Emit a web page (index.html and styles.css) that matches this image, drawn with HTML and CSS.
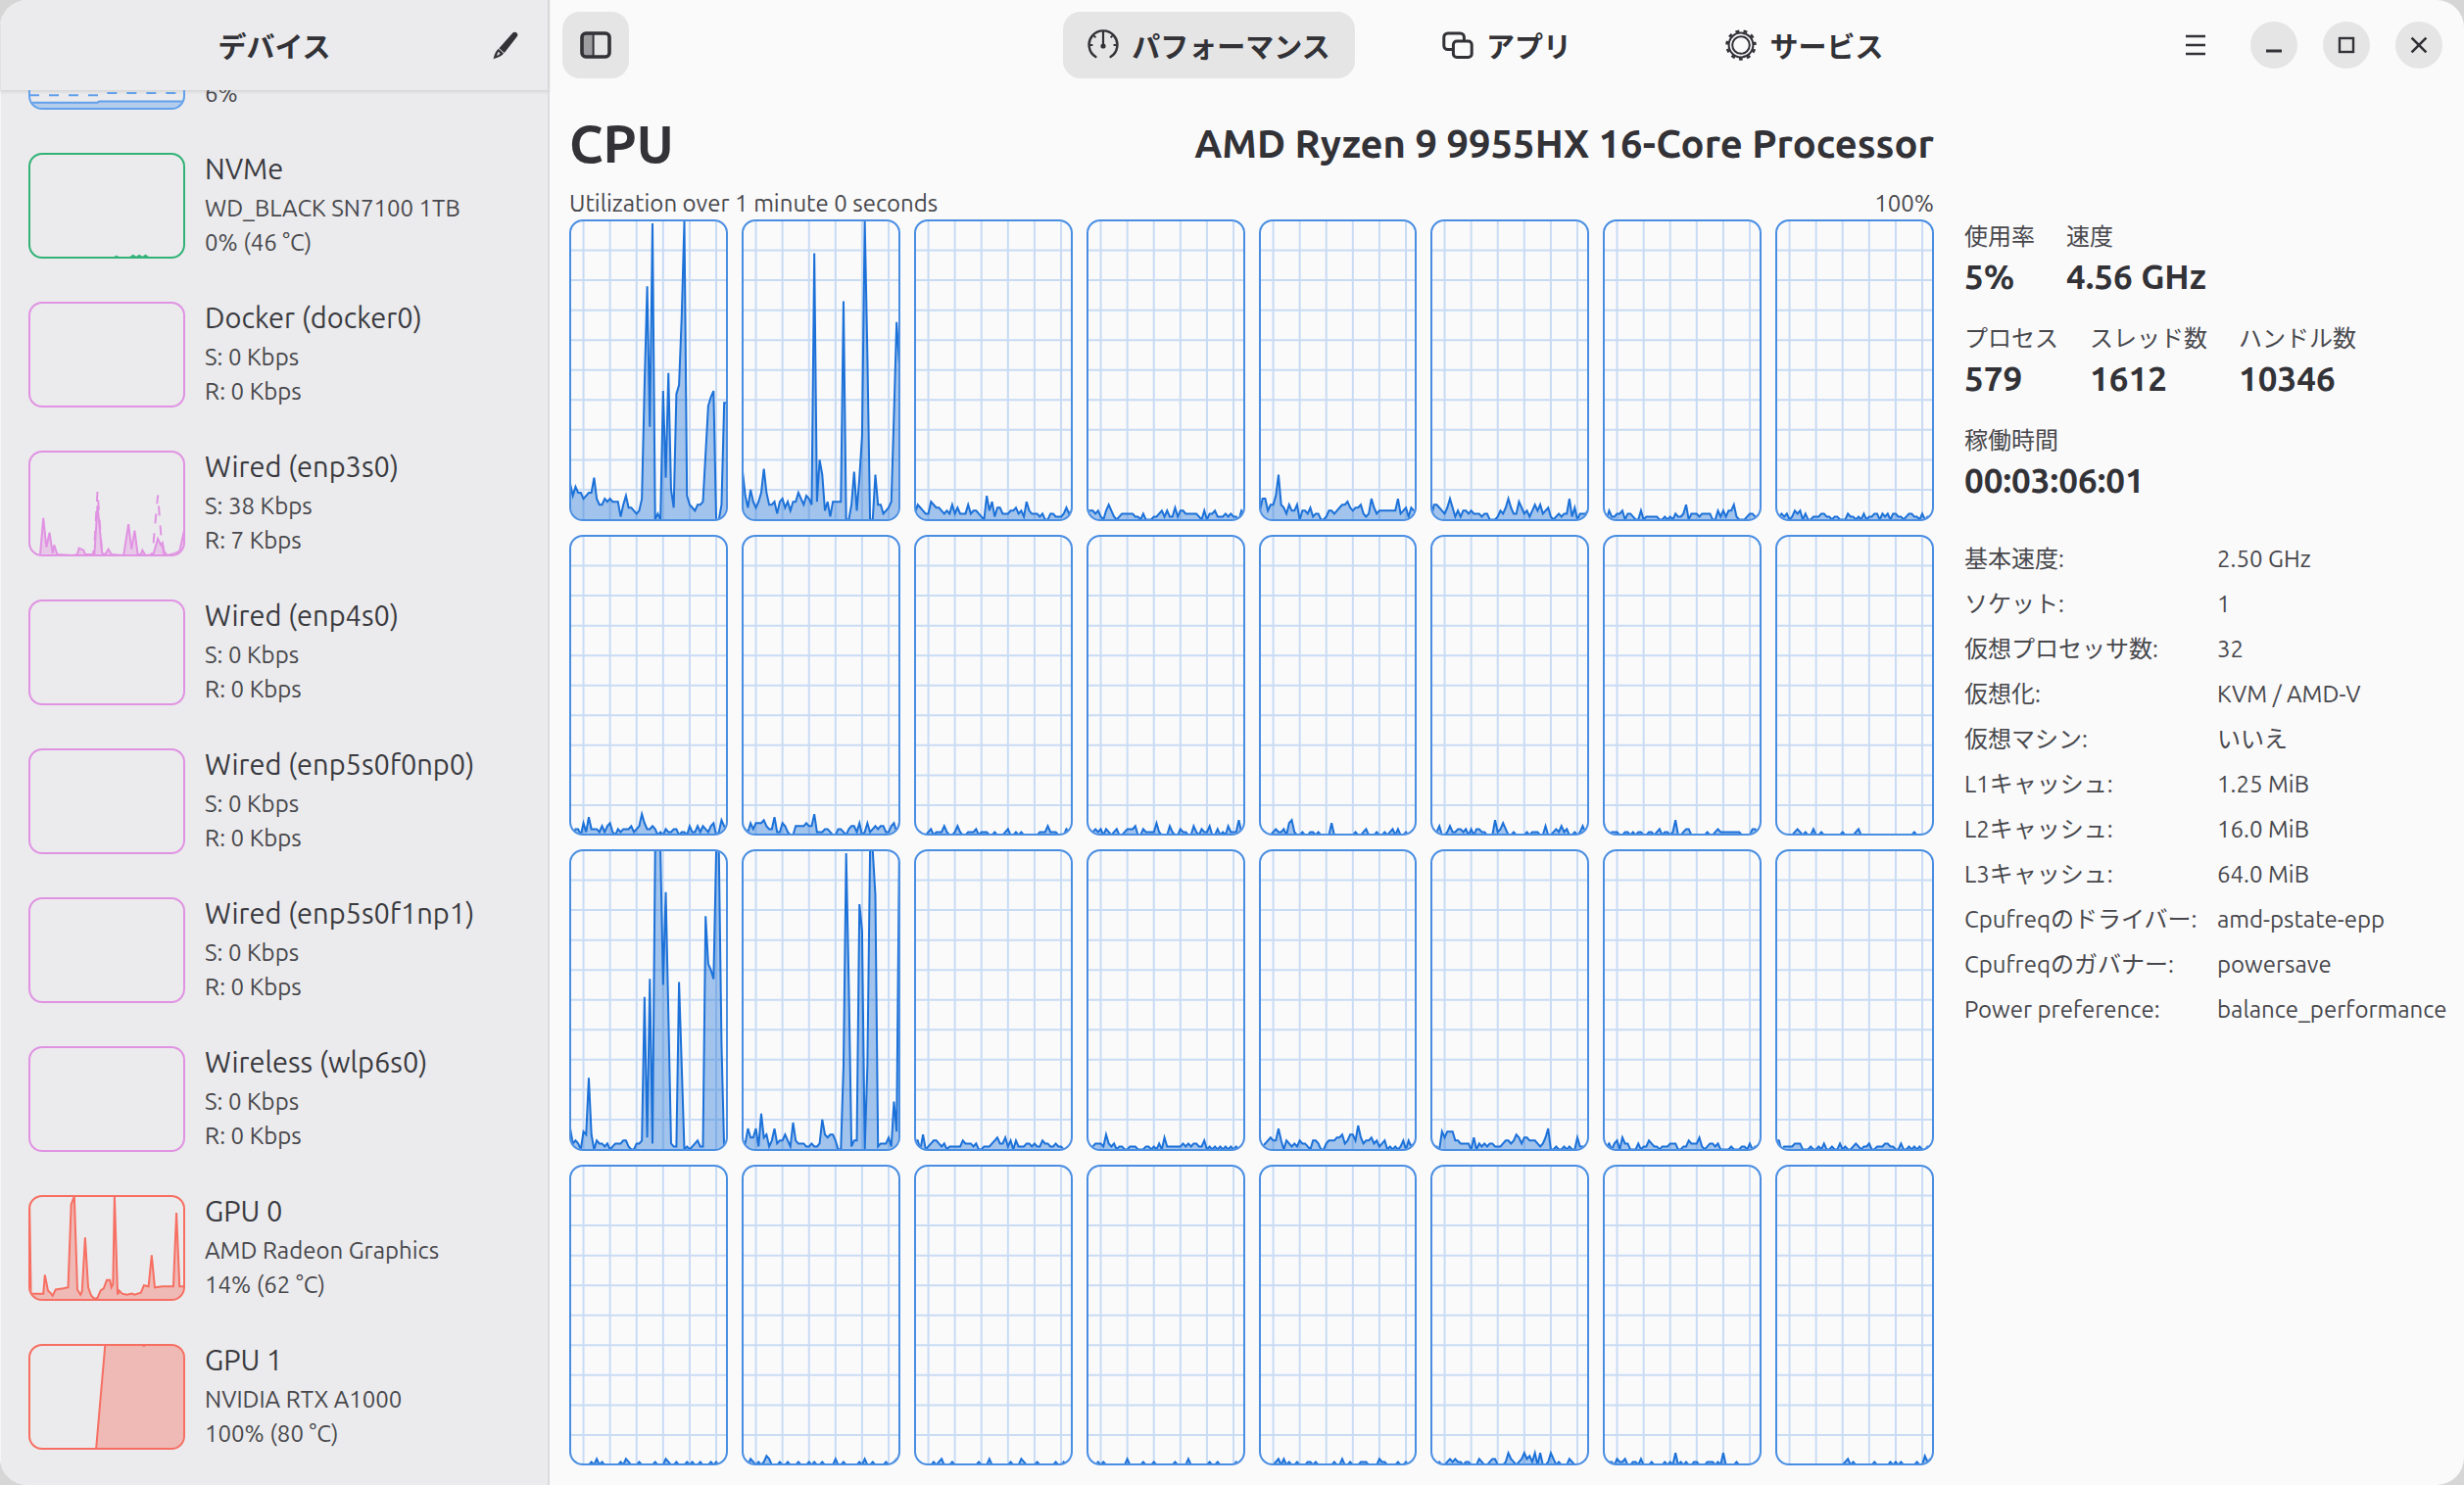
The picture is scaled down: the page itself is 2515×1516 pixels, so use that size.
FILE: index.html
```html
<!DOCTYPE html>
<html lang="ja">
<head>
<meta charset="utf-8">
<title>CPU</title>
<link rel="stylesheet" href="styles.css">
</head>
<body>
<div class="window">
  <aside class="sidebar">
    <header class="sidebar-header">
      <h2 class="sidebar-title">デバイス</h2>
      <button class="icon-button edit-button" type="button" aria-label="編集">
        <svg class="icon" viewBox="0 0 16 16"><path d="M12.200 1.800c.6-.6 1.400-.6 2 0s.7 1.300.1 2L7.900 12 5.200 9.600z" fill="currentColor"/><path d="M4.900 9.900L7.500 12.200c-.8 1.200-2.200 2-5.200 2.900.5-2.500 1.400-4.300 2.600-5.200z" fill="currentColor"/><path d="M4.800 11.400l1 .9c-.5.5-.9.9-1.700 1.200.1-.8.3-1.500.7-2.100z" fill="#d9d9db"/></svg>
      </button>
    </header>
    <ul class="devices">
      <li><button class="device" type="button"><span class="thumb blue" data-chart="memory"></span><span class="device-text"><span class="device-line">6%</span></span></button></li>
      <li><button class="device" type="button"><span class="thumb green" data-chart="nvme"></span><span class="device-text"><span class="device-name">NVMe</span><span class="device-line">WD_BLACK SN7100 1TB</span><span class="device-line">0% (46 °C)</span></span></button></li>
      <li><button class="device" type="button"><span class="thumb pink"></span><span class="device-text"><span class="device-name">Docker (docker0)</span><span class="device-line">S: 0 Kbps</span><span class="device-line">R: 0 Kbps</span></span></button></li>
      <li><button class="device" type="button"><span class="thumb pink" data-chart="wired"></span><span class="device-text"><span class="device-name">Wired (enp3s0)</span><span class="device-line">S: 38 Kbps</span><span class="device-line">R: 7 Kbps</span></span></button></li>
      <li><button class="device" type="button"><span class="thumb pink"></span><span class="device-text"><span class="device-name">Wired (enp4s0)</span><span class="device-line">S: 0 Kbps</span><span class="device-line">R: 0 Kbps</span></span></button></li>
      <li><button class="device" type="button"><span class="thumb pink"></span><span class="device-text"><span class="device-name">Wired (enp5s0f0np0)</span><span class="device-line">S: 0 Kbps</span><span class="device-line">R: 0 Kbps</span></span></button></li>
      <li><button class="device" type="button"><span class="thumb pink"></span><span class="device-text"><span class="device-name">Wired (enp5s0f1np1)</span><span class="device-line">S: 0 Kbps</span><span class="device-line">R: 0 Kbps</span></span></button></li>
      <li><button class="device" type="button"><span class="thumb pink"></span><span class="device-text"><span class="device-name">Wireless (wlp6s0)</span><span class="device-line">S: 0 Kbps</span><span class="device-line">R: 0 Kbps</span></span></button></li>
      <li><button class="device" type="button"><span class="thumb red" data-chart="gpu0"></span><span class="device-text"><span class="device-name">GPU 0</span><span class="device-line">AMD Radeon Graphics</span><span class="device-line">14% (62 °C)</span></span></button></li>
      <li><button class="device" type="button"><span class="thumb red" data-chart="gpu1"></span><span class="device-text"><span class="device-name">GPU 1</span><span class="device-line">NVIDIA RTX A1000</span><span class="device-line">100% (80 °C)</span></span></button></li>
    </ul>
  </aside>

  <main class="main">
    <header class="topbar">
      <div class="topbar-start">
        <button class="icon-button toggle-button" type="button" aria-label="サイドバー">
          <svg class="icon" viewBox="0 0 16 16"><rect x="1" y="2" width="6" height="12" fill="currentColor" opacity=".4"/><rect x="1" y="2" width="14" height="12" rx="2" fill="none" stroke="currentColor" stroke-width="1.800"/><path d="M6.800 2v12" stroke="currentColor" stroke-width="1"/></svg>
        </button>
      </div>
      <nav class="tabs">
        <button class="tab active" type="button">
          <svg class="icon" viewBox="0 0 16 16" fill="none" stroke="currentColor"><path d="M4.200 14A7.200 7.200 0 1 1 11.800 14" stroke-width="1.200" stroke-linecap="round"/><path d="M8 1V8.500" stroke-width="1.100"/><path d="M1.200 8h1.500M14.800 8h-1.500M3.200 3.200l1 1M12.800 3.200l-1 1" stroke-width="1"/><circle cx="8" cy="8.500" r="1.300" fill="currentColor" stroke="none"/></svg>
          パフォーマンス
        </button>
        <button class="tab" type="button">
          <svg class="icon" viewBox="0 0 16 16" fill="none" stroke="currentColor" stroke-width="1.500"><rect x="5.700" y="6" width="9.400" height="8.300" rx="1.800"/><path d="M5.200 10.300H2.900a2 2 0 0 1-2-2V4a2 2 0 0 1 2-2h6.300a2 2 0 0 1 2 2v1.600"/></svg>
          アプリ
        </button>
        <button class="tab" type="button">
          <svg class="icon" viewBox="0 0 16 16" fill="none" stroke="currentColor"><circle cx="8" cy="8" r="6.200" stroke-width="1"/><circle cx="8" cy="8" r="4.400" stroke-width="1"/><circle cx="8" cy="8" r="7.200" stroke-width="1.300" stroke-dasharray="1.900 2.213" stroke-dashoffset="-10.360"/></svg>
          サービス
        </button>
      </nav>
      <div class="topbar-end">
        <button class="icon-button menu-button" type="button" aria-label="メニュー">
          <svg class="icon" viewBox="0 0 16 16"><path d="M3 3.500h10M3 8h10M3 12.500h10" stroke="currentColor" stroke-width="1.300"/></svg>
        </button>
        <button class="window-button" type="button" aria-label="最小化"><svg class="icon" viewBox="0 0 16 16"><path d="M4 11h8" stroke="currentColor" stroke-width="1.400"/></svg></button>
        <button class="window-button" type="button" aria-label="最大化"><svg class="icon" viewBox="0 0 16 16"><rect x="4.500" y="4.500" width="7" height="7" fill="none" stroke="currentColor" stroke-width="1.200"/></svg></button>
        <button class="window-button" type="button" aria-label="閉じる"><svg class="icon" viewBox="0 0 16 16"><path d="M4.300 4.300l7.400 7.400M11.700 4.300l-7.400 7.400" stroke="currentColor" stroke-width="1.300"/></svg></button>
      </div>
    </header>

    <div class="content">
      <section class="usage">
        <div class="usage-title">
          <h1 class="usage-name">CPU</h1>
          <p class="usage-model">AMD Ryzen 9 9955HX 16-Core Processor</p>
        </div>
        <div class="usage-caption"><span>Utilization over 1 minute 0 seconds</span><span>100%</span></div>
        <div class="cores" id="cores"></div>
      </section>
      <section class="details">
        <dl class="stats">
          <div class="stat"><dt>使用率</dt><dd>5%</dd></div>
          <div class="stat"><dt>速度</dt><dd>4.56 GHz</dd></div>
        </dl>
        <dl class="stats">
          <div class="stat"><dt>プロセス</dt><dd>579</dd></div>
          <div class="stat"><dt>スレッド数</dt><dd>1612</dd></div>
          <div class="stat"><dt>ハンドル数</dt><dd>10346</dd></div>
        </dl>
        <dl class="stats">
          <div class="stat"><dt>稼働時間</dt><dd>00:03:06:01</dd></div>
        </dl>
        <table class="specs">
          <tr><th scope="row">基本速度:</th><td>2.50 GHz</td></tr>
          <tr><th scope="row">ソケット:</th><td>1</td></tr>
          <tr><th scope="row">仮想プロセッサ数:</th><td>32</td></tr>
          <tr><th scope="row">仮想化:</th><td>KVM / AMD-V</td></tr>
          <tr><th scope="row">仮想マシン:</th><td>いいえ</td></tr>
          <tr><th scope="row">L1キャッシュ:</th><td>1.25 MiB</td></tr>
          <tr><th scope="row">L2キャッシュ:</th><td>16.0 MiB</td></tr>
          <tr><th scope="row">L3キャッシュ:</th><td>64.0 MiB</td></tr>
          <tr><th scope="row">Cpufreqのドライバー:</th><td>amd-pstate-epp</td></tr>
          <tr><th scope="row">Cpufreqのガバナー:</th><td>powersave</td></tr>
          <tr><th scope="row">Power preference:</th><td>balance_performance</td></tr>
        </table>
      </section>
    </div>
  </main>
</div>
<script src="charts.js"></script>
</body>
</html>
```
FILE: styles.css
```css
* { box-sizing: border-box; }

body {
  margin: 0;
  background: #d6d6d7;
  color: #323237;
  font-family: "Ubuntu", "Noto Sans", "Noto Sans CJK JP", sans-serif;
  font-size: 24px;
}

button {
  margin: 0;
  padding: 0;
  border: 0;
  background: none;
  color: inherit;
  font: inherit;
  text-align: left;
}

h1, h2, p, ul, dl, dd { margin: 0; padding: 0; }
ul { list-style: none; }

.icon { display: block; width: 32px; height: 32px; flex: none; }

.window {
  display: flex;
  height: 100vh;
  border-radius: 28px;
  overflow: hidden;
  background: #fafafb;
}

/* Sidebar */
.sidebar {
  display: flex;
  flex-direction: column;
  flex: none;
  width: 561px;
  background: #ebebed;
  border-right: 2px solid #dcdcde;
  border-left: 1px solid #f6f6f7;
}

.sidebar-header {
  display: grid;
  grid-template-columns: 1fr auto 1fr;
  align-items: center;
  flex: none;
  height: 92px;
  padding: 0 28px;
  box-shadow: 0 1px 3px 1px #d4d4d6;
}

.sidebar-title {
  grid-column: 2;
  font-family: "Noto Sans CJK JP", sans-serif;
  font-size: 29px;
  line-height: 40px;
}

.edit-button { justify-self: end; }

.devices {
  display: flex;
  flex-direction: column;
  justify-content: flex-end;
  flex: 1;
  min-height: 0;
  overflow: hidden;
  padding: 0 28px 14px;
}

.device {
  display: flex;
  align-items: center;
  gap: 20px;
  width: 100%;
  height: 152px;
}

.thumb {
  display: block;
  flex: none;
  width: 160px;
  height: 108px;
  border: 2px solid;
  border-radius: 14px;
  overflow: hidden;
}

.device-text {
  display: flex;
  flex-direction: column;
  justify-content: flex-end;
  height: 110px;
  white-space: nowrap;
  color: #3a3a3f;
}

.device-name { font-size: 29px; line-height: 46px; }
.device-line { color: #48484c; line-height: 35px; }

.blue { color: #62a0ea; }
.green { color: #33b277; }
.pink { color: #e093e2; }
.red { color: #f66f62; }

/* Top bar */
.main {
  display: flex;
  flex-direction: column;
  flex: 1;
  min-width: 0;
}

.topbar {
  display: grid;
  grid-template-columns: 1fr auto 1fr;
  align-items: center;
  height: 92px;
  padding: 0 13px;
}

.icon-button {
  display: flex;
  align-items: center;
  justify-content: center;
}

.toggle-button {
  width: 68px;
  height: 68px;
  border-radius: 18px;
  background: #e5e5e6;
}

.tabs {
  display: grid;
  grid-template-columns: repeat(3, 298px);
  gap: 6px;
}

.tab {
  display: flex;
  align-items: center;
  justify-content: center;
  gap: 13px;
  height: 68px;
  border-radius: 18px;
  font-family: "Noto Sans CJK JP", sans-serif;
  font-size: 29px;
  font-weight: 700;
  line-height: 40px;
}

.tab.active { background: #e5e5e6; }

.topbar-end {
  display: flex;
  align-items: center;
  justify-content: flex-end;
  gap: 26px;
  padding-right: 9px;
}

.menu-button { margin-right: 14px; }

.window-button {
  display: flex;
  align-items: center;
  justify-content: center;
  width: 48px;
  height: 48px;
  border-radius: 50%;
  background: #e5e5e6;
}

/* Usage */
.content {
  display: flex;
  flex: 1;
  min-height: 0;
}

.usage {
  display: flex;
  flex-direction: column;
  flex: 1;
  min-width: 0;
  padding: 4px 0 20px 20px;
}

.usage-title {
  display: flex;
  align-items: center;
  justify-content: space-between;
  height: 100px;
  font-weight: 700;
  white-space: nowrap;
}

.usage-name { font-size: 54px; }
.usage-model { font-size: 40px; }

.usage-caption {
  display: flex;
  justify-content: space-between;
  height: 28px;
  line-height: 24px;
  color: #48484c;
}

.cores {
  display: grid;
  grid-template-columns: repeat(8, minmax(0, 1fr));
  grid-template-rows: repeat(4, minmax(0, 1fr));
  gap: 14px;
  flex: 1;
  min-height: 0;
}

.core {
  min-height: 0;
  border: 2px solid #4a8ee2;
  border-radius: 14px;
  overflow: hidden;
  color: #1c71d8;
}

/* Charts reach the middle of the surrounding border. */
.chart {
  display: block;
  width: calc(100% + 2px);
  height: calc(100% + 2px);
  margin: -1px;
  overflow: visible;
}

.chart-grid { fill: none; stroke: currentColor; stroke-width: 2; opacity: 0.22; }
.chart-area { fill: currentColor; opacity: 0.4; }
.chart-line { fill: none; stroke: currentColor; stroke-width: 2; }
.chart-dashed { fill: none; stroke: currentColor; stroke-width: 2; stroke-dasharray: 10 10; }
.chart-grid, .chart-line, .chart-dashed { vector-effect: non-scaling-stroke; }

/* Details */
.details {
  flex: none;
  width: 541px;
  padding: 131px 16px 0 31px;
}

.stats { display: flex; gap: 32px; margin-bottom: 20px; }
.stat { white-space: nowrap; }

.stat dt {
  font-family: "Noto Sans CJK JP", sans-serif;
  font-size: 24px;
  line-height: 34px;
  color: #48484c;
}

.stat dd { font-size: 35px; font-weight: 700; line-height: 50px; }

.specs {
  width: 100%;
  margin-top: 33px;
  border-collapse: collapse;
  table-layout: fixed;
  color: #48484c;
  white-space: nowrap;
}

.specs th, .specs td {
  height: 46px;
  padding: 0;
  font-weight: 400;
  line-height: 40px;
  text-align: left;
  vertical-align: middle;
}

.specs th { width: 258px; }
```
FILE: charts.js
```js
// One line per logical core, one utilization sample (in percent) per second.
const cores = [
  "12,8,11,9,9,7,8,9,9,14,7,5,5,7,6,7,6,6,6,1,5,8,4,4,3,2,3,7,45,78,31,99,0,2,0,43,14,49,10,4,42,45,68,100,8,5,4,3,5,5,6,22,38,41,43,0,0,5,39,39",
  "16,8,4,10,6,4,6,9,17,9,5,5,6,2,6,7,4,6,3,6,6,9,7,5,8,7,5,89,6,20,15,3,6,1,6,6,6,6,73,0,0,5,16,3,14,28,100,55,0,0,15,5,5,2,3,4,6,35,66,52",
  "2,5,4,3,2,2,6,5,4,4,3,2,3,2,5,2,4,2,2,2,5,2,3,3,2,1,0,8,3,6,1,4,4,2,2,2,3,3,4,2,3,1,6,3,2,2,2,1,2,0,0,2,2,1,1,1,2,4,2,3",
  "3,3,3,2,3,1,0,3,5,3,1,0,1,2,2,2,2,2,1,1,0,2,0,0,0,1,1,2,3,1,3,1,1,4,1,3,3,2,2,2,2,2,1,0,3,0,2,2,3,1,1,1,2,1,2,1,1,0,3,2",
  "3,7,7,3,5,5,8,15,5,4,2,5,3,3,5,0,3,3,2,4,1,2,2,0,0,1,3,3,2,3,4,5,5,6,4,3,4,4,5,2,1,2,7,4,2,3,3,3,3,3,3,3,7,2,3,4,1,4,3,3",
  "1,5,5,4,3,2,4,7,4,1,3,1,3,3,2,3,2,2,2,1,2,2,0,0,0,1,3,2,4,7,4,2,2,6,4,2,3,1,3,5,3,5,2,3,4,1,0,1,2,1,2,2,7,1,4,0,2,2,2,3",
  "1,0,3,1,1,2,2,3,0,2,2,1,0,0,3,0,1,1,1,1,1,0,0,1,0,1,0,2,1,1,2,5,0,2,2,2,1,2,2,2,2,0,0,3,1,3,1,3,3,5,1,0,0,0,1,2,2,1,1,1",
  "0,1,2,1,2,0,1,3,2,3,0,2,0,0,1,1,1,2,2,1,1,0,1,1,0,0,0,2,1,1,0,1,0,2,0,1,1,2,2,0,2,1,2,0,2,2,1,1,0,1,2,2,1,1,0,2,0,1,1,2",
  "1,0,2,2,0,4,1,6,2,2,2,1,3,1,3,4,1,0,2,1,2,2,2,3,1,2,3,7,4,2,2,3,2,0,1,0,2,1,1,2,2,0,1,1,0,3,1,1,3,1,3,2,1,3,4,0,1,5,3,1",
  "3,2,1,4,2,4,4,4,5,3,2,2,6,1,1,4,3,1,0,0,3,3,3,3,4,3,3,7,1,1,1,2,2,1,0,0,2,2,1,0,2,3,3,1,4,0,1,4,1,2,3,2,3,3,1,1,3,4,1,4",
  "2,0,1,0,0,1,2,0,1,1,1,3,1,0,0,1,3,1,0,0,1,1,1,2,0,1,1,1,0,0,1,0,0,0,1,2,0,0,1,0,1,0,0,0,0,0,0,1,1,1,3,1,1,1,0,0,0,2,1,1",
  "0,1,1,2,1,2,0,2,1,0,1,2,0,0,1,2,2,2,3,0,0,2,1,1,1,1,4,1,0,0,0,3,1,0,0,2,1,1,0,0,3,1,0,2,1,1,3,0,0,2,0,1,0,3,1,1,1,5,1,1",
  "0,0,0,0,0,1,2,1,1,2,0,4,5,1,0,0,1,0,0,1,1,0,1,0,0,0,0,4,0,0,0,0,0,0,0,0,1,0,0,1,2,0,0,0,1,0,0,1,0,1,2,0,2,0,0,1,0,1,2,1",
  "0,1,1,3,0,0,1,3,1,1,2,2,1,2,0,2,0,2,2,1,1,0,0,0,5,1,2,4,2,0,0,1,0,0,0,0,1,0,1,1,1,0,0,3,0,0,1,2,1,3,1,2,0,0,1,0,1,3,1,2",
  "4,1,0,1,1,1,0,0,1,1,0,1,0,1,1,0,0,1,1,0,1,2,0,1,1,0,1,5,0,0,1,2,2,0,0,0,0,0,0,1,0,0,1,2,1,1,1,1,1,1,1,1,0,0,0,0,2,2,1,1",
  "0,0,0,0,0,0,0,1,2,1,0,1,0,0,2,0,0,1,0,0,0,0,0,0,0,1,0,0,0,0,1,2,0,0,0,0,0,0,0,0,0,0,0,0,0,0,0,0,0,0,0,0,1,0,0,0,0,0,0,0",
  "7,2,3,2,0,6,5,24,5,0,3,2,2,1,2,0,1,2,2,2,3,3,1,0,0,2,2,3,51,4,57,2,100,100,100,55,86,45,2,1,1,56,28,0,1,0,1,2,3,1,1,78,62,60,57,100,100,35,0,0",
  "1,2,7,4,4,7,1,12,4,5,1,3,7,2,3,3,5,3,1,9,3,2,2,2,1,1,2,1,1,2,10,5,4,5,5,3,0,0,28,99,55,1,3,3,82,73,0,28,100,100,85,1,2,2,2,4,1,16,6,100",
  "3,3,0,5,0,1,2,3,3,2,1,2,0,1,1,1,1,1,3,2,2,2,1,2,0,0,1,1,1,2,3,4,2,2,4,1,3,0,3,1,1,1,2,2,1,2,1,1,3,2,2,1,1,2,1,1,0,0,0,0",
  "0,0,1,2,2,2,1,5,2,1,2,0,1,1,0,0,1,1,1,0,0,0,1,1,0,1,0,2,0,4,1,1,1,1,1,1,2,1,2,1,2,2,1,1,3,0,1,0,1,0,1,0,1,0,1,0,1,0,0,0",
  "3,1,2,3,4,3,3,7,3,0,3,2,1,2,1,3,2,2,1,0,3,3,2,0,0,2,3,3,3,4,4,5,2,3,5,5,3,8,4,2,3,3,4,2,3,1,2,3,0,1,0,1,0,1,3,0,3,1,2,3",
  "2,1,1,0,6,4,6,6,6,3,3,2,2,2,2,0,4,0,2,1,2,1,2,2,1,1,1,2,3,3,2,3,5,4,2,4,4,3,3,3,2,1,2,4,7,0,0,1,0,0,1,0,1,0,0,4,1,1,1,0",
  "2,1,2,0,2,3,0,4,2,2,0,0,0,2,0,1,1,3,2,1,1,0,1,1,1,2,2,2,0,0,1,1,3,2,2,2,4,1,0,1,2,2,1,2,0,0,0,0,1,0,0,0,1,1,0,2,0,1,1,1",
  "3,3,0,1,1,1,1,2,2,2,0,0,0,1,0,0,1,0,2,0,0,1,0,0,2,0,1,0,0,1,2,1,0,1,1,2,0,0,1,1,1,2,2,1,1,0,0,2,0,0,1,0,1,0,1,0,0,1,1,2",
  "0,0,1,0,0,0,0,0,1,0,2,0,1,0,0,0,0,0,0,1,0,2,1,0,0,0,1,0,0,0,0,0,1,0,0,0,2,1,0,0,1,0,0,0,1,0,1,0,0,1,0,0,0,1,0,1,0,0,0,0",
  "0,0,0,2,1,0,1,0,1,3,2,0,0,0,1,0,0,1,0,0,0,1,0,0,0,1,0,1,0,0,1,0,0,0,0,2,0,0,1,0,0,0,0,0,1,0,2,0,0,1,0,0,0,0,1,0,0,1,2,1",
  "0,0,0,0,0,0,0,1,0,1,2,0,0,0,1,0,0,0,0,0,0,0,0,0,1,0,0,0,2,0,0,0,0,0,0,0,1,0,0,0,2,1,0,0,0,0,1,0,0,0,0,0,0,1,0,0,1,0,0,0",
  "0,0,0,0,1,0,1,0,0,0,0,0,0,0,0,2,0,0,0,0,0,1,0,0,0,1,0,0,0,0,0,0,0,1,0,0,0,0,2,0,0,0,0,0,0,0,1,0,0,1,0,0,0,0,0,0,1,0,0,0",
  "0,0,0,0,0,0,1,2,0,2,0,1,0,0,1,0,0,0,1,1,0,1,0,0,0,0,0,0,1,0,0,2,0,0,1,0,0,0,1,1,1,0,0,0,0,2,1,1,0,0,0,0,1,0,0,1,0,0,0,0",
  "0,0,0,1,0,0,1,2,1,2,1,1,0,1,1,0,0,0,2,1,0,0,1,2,2,0,0,0,1,4,2,1,0,1,2,4,2,3,1,4,0,4,0,0,1,4,2,0,1,0,0,0,2,1,0,0,0,0,1,1",
  "0,0,1,1,0,2,1,1,2,0,0,1,1,0,2,0,0,0,1,0,0,0,0,1,0,1,0,4,0,1,0,1,0,0,1,1,0,0,0,1,1,1,0,1,0,4,0,0,0,0,1,0,0,0,0,0,0,0,0,0",
  "0,0,0,0,0,0,0,0,0,0,0,0,0,0,0,0,0,0,0,0,0,0,0,0,0,0,1,2,0,1,0,0,0,0,0,0,0,1,0,0,0,0,0,1,0,1,0,1,0,0,0,0,0,1,0,0,3,1,2,2"
];

// Sidebar thumbnails: [x, y] pairs on a 100 by 100 field.
const thumbs = {
  memory: {
    line: "0,6 44,6 45,7 100,7",
    dashed: "0,13 48,13 50,15 100,15"
  },
  nvme: { line: "0,0 55,0 56,1 58,0 65,0 67,2 69,0 71,2 73,0 75,2 77,0 100,0" },
  wired: {
    line: "0,0 7,1 9,36 11,8 13,22 15,2 16,10 18,1 28,0 31,1 32,7 35,5 36,1 42,1 44,48 47,2 49,1 51,6 53,1 60,0 61,1 64,30 66,6 68,24 70,1 72,1 73,5 75,0 80,1 83,16 85,10 86,12 87,4 89,0 94,2 97,4 100,24",
    dashed: "0,0 41,0 42,10 44,62 46,20 47,0 79,0 80,10 83,58 85,20 87,0 100,0"
  },
  gpu0: { line: "0,100 1,6 9,6 10,24 12,9 14,6 15,4 17,10 22,11 25,12 27,92 29,100 31,10 33,5 34,8 36,60 38,12 40,4 42,1 44,2 46,9 48,11 50,19 52,19 53,12 54,15 55,100 57,5 58,9 60,6 63,5 66,6 68,5 70,6 72,7 74,14 77,13 79,43 81,12 86,13 93,13 95,84 97,13 100,13" },
  gpu1: { line: "0,-2 43,-2 49,101 72,101 74,99 76,101 102,101" }
};

const SVG = "http://www.w3.org/2000/svg";

function add(svg, name, className, attribute, value) {
  const shape = document.createElementNS(SVG, name);
  shape.setAttribute("class", className);
  shape.setAttribute(attribute, value);
  svg.append(shape);
}

function draw(host, width, points, grid, dashed) {
  const svg = document.createElementNS(SVG, "svg");
  svg.setAttribute("class", "chart");
  svg.setAttribute("viewBox", `0 0 ${width} 100`);
  svg.setAttribute("preserveAspectRatio", "none");
  const text = points.map(([x, y]) => `${x},${100 - y}`).join(" ");
  if (grid) add(svg, "path", "chart-grid", "d", grid);
  add(svg, "polygon", "chart-area", "points", `0,102 ${text} ${width},102`);
  add(svg, "polyline", "chart-line", "points", text);
  if (dashed) add(svg, "polyline", "chart-dashed", "points", dashed.map(([x, y]) => `${x},${100 - y}`).join(" "));
  host.append(svg);
}

let grid = "";
for (let x = 5; x < 59; x += 10) grid += `M${x} 0V100`;
for (let y = 10; y < 100; y += 10) grid += `M0 ${y}H59`;

for (const samples of cores) {
  const cell = document.createElement("div");
  cell.className = "core";
  document.getElementById("cores").append(cell);
  draw(cell, 59, samples.split(",").map((value, second) => [second, Number(value)]), grid);
}

const pairs = (text) => text && text.split(" ").map((pair) => pair.split(",").map(Number));
for (const host of document.querySelectorAll("[data-chart]")) {
  const { line, dashed } = thumbs[host.dataset.chart];
  draw(host, 100, pairs(line), "", pairs(dashed));
}
```
